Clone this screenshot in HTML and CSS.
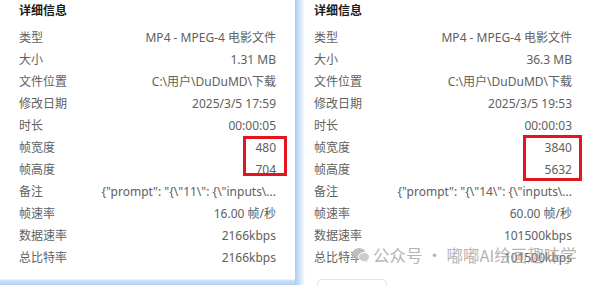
FILE: index.html
```html
<!DOCTYPE html>
<html lang="zh-CN">
<head>
    <meta charset="UTF-8">
    <meta name="viewport" content="width=device-width, initial-scale=1.0">
    <title>详细信息</title>
    <link rel="stylesheet" href="styles.css">
</head>
<body>
    <div class="shots">
        <div class="pane left">
            <div class="title">详细信息</div>
            <div class="rows">
                <div class="row"><span class="k">类型</span><span class="v">MP4 - MPEG-4 电影文件</span></div>
                <div class="row"><span class="k">大小</span><span class="v">1.31 MB</span></div>
                <div class="row"><span class="k">文件位置</span><span class="v">C:\用户\DuDuMD\下载</span></div>
                <div class="row"><span class="k">修改日期</span><span class="v">2025/3/5 17:59</span></div>
                <div class="row"><span class="k">时长</span><span class="v">00:00:05</span></div>
                <div class="row"><span class="k">帧宽度</span><span class="v">480</span></div>
                <div class="row"><span class="k">帧高度</span><span class="v">704</span></div>
                <div class="row"><span class="k">备注</span><span class="v">{"prompt": "{\"11\": {\"inputs\...</span></div>
                <div class="row"><span class="k">帧速率</span><span class="v">16.00 帧/秒</span></div>
                <div class="row"><span class="k">数据速率</span><span class="v">2166kbps</span></div>
                <div class="row"><span class="k">总比特率</span><span class="v">2166kbps</span></div>
            </div>
            <div class="mark box-left"></div>
        </div>
        <div class="edge"></div>
        <div class="pane right">
            <div class="title">详细信息</div>
            <div class="rows">
                <div class="row"><span class="k">类型</span><span class="v">MP4 - MPEG-4 电影文件</span></div>
                <div class="row"><span class="k">大小</span><span class="v">36.3 MB</span></div>
                <div class="row"><span class="k">文件位置</span><span class="v">C:\用户\DuDuMD\下载</span></div>
                <div class="row"><span class="k">修改日期</span><span class="v">2025/3/5 19:53</span></div>
                <div class="row"><span class="k">时长</span><span class="v">00:00:03</span></div>
                <div class="row"><span class="k">帧宽度</span><span class="v">3840</span></div>
                <div class="row"><span class="k">帧高度</span><span class="v">5632</span></div>
                <div class="row"><span class="k">备注</span><span class="v">{"prompt": "{\"14\": {\"inputs\...</span></div>
                <div class="row"><span class="k">帧速率</span><span class="v">60.00 帧/秒</span></div>
                <div class="row"><span class="k">数据速率</span><span class="v">101500kbps</span></div>
                <div class="row"><span class="k">总比特率</span><span class="v">101500kbps</span></div>
            </div>
            <div class="btn"></div>
            <div class="mark box-right"></div>
        </div>
        <div class="watermark">
            <svg class="wx" width="18" height="16" viewBox="0 0 18 16">
                <ellipse cx="7" cy="6.5" rx="6.5" ry="5.5" fill="#bdbdbd"/>
                <path d="M3 10.5 L2.5 13.5 L6 11.5 Z" fill="#bdbdbd"/>
                <ellipse cx="12" cy="10" rx="5.5" ry="4.6" fill="#cdcdcd" stroke="#fff" stroke-width="1"/>
                <path d="M14.5 13.5 L15.5 15.5 L12.5 14 Z" fill="#cdcdcd"/>
            </svg>
            <span>公众号 · 嘟嘟AI绘画趣味学</span>
        </div>
    </div>
</body>
</html>
```

FILE: styles.css
```css
body{
    margin: 0;
    background: #ffffff;
    font-family: "Noto Sans", "Noto Sans CJK SC", sans-serif;
    font-size: 12px;
}
.shots{
    position: relative;
    display: flex;
    width: 592px;
    height: 285px;
    overflow: hidden;
}
.pane{
    position: relative;
    box-sizing: border-box;
    height: 285px;
    background: #ffffff;
}
.pane.left{
    width: 295px;
    padding: 0 19px 0 19px;
    background: linear-gradient(to bottom, #ffffff 279px, #d3e3f8 280px, #b4cdf0 285px);
}
.edge{
    width: 10px;
    height: 285px;
    background: linear-gradient(to right, #aecaf1, #dde9f9 60%, #ffffff);
}
.pane.right{
    flex: 1;
    padding: 0 20px 0 9px;
}
.title{
    height: 21px;
    line-height: 21px;
    font-weight: bold;
    color: #1b1b1b;
}
.rows{
    margin-top: 5px;
}
.row{
    display: flex;
    justify-content: space-between;
    align-items: center;
    height: 22px;
    color: #616161;
    white-space: nowrap;
}
.row .v{
    color: #606060;
}
.btn{
    width: 68px;
    height: 20px;
    margin: 11px 0 0 3px;
    border: 1px solid #e4e4e4;
    border-radius: 5px;
}
.mark{
    position: absolute;
    border: 3px solid #e5151f;
    box-sizing: border-box;
}
.box-left{
    left: 243px;
    top: 136px;
    width: 44px;
    height: 40px;
}
.box-right{
    left: 218px;
    top: 135px;
    width: 59px;
    height: 46px;
}
.watermark{
    position: absolute;
    left: 352px;
    top: 245px;
    display: flex;
    align-items: center;
    gap: 3px;
    font-family: "Noto Sans CJK SC", sans-serif;
    font-size: 16.5px;
    line-height: 20px;
    color: rgba(160, 160, 160, 0.8);
}
```
